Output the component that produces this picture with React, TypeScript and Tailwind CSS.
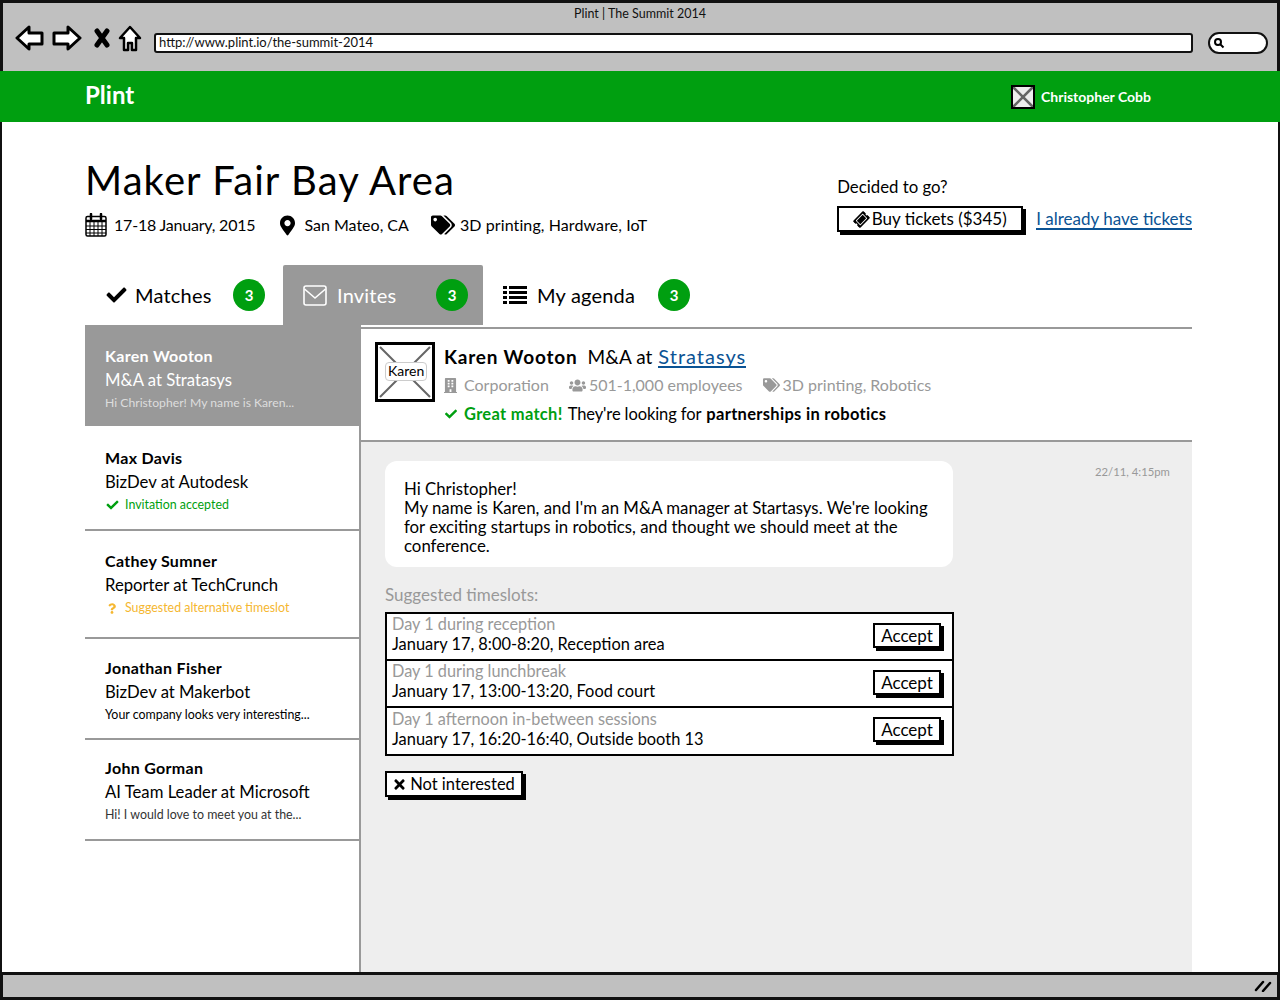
import { FaCheck, FaMapMarkerAlt, FaTags, FaBuilding, FaUsers, FaTicketAlt, FaTimes, FaQuestion } from 'react-icons/fa';

const people = [
  { name: 'Max Davis', role: 'BizDev at Autodesk', note: 'Invitation accepted', tone: 'text-[#009f10]', kind: 'check', box: 'h-[105px] pt-[20px]' },
  { name: 'Cathey Sumner', role: 'Reporter at TechCrunch', note: 'Suggested alternative timeslot', tone: 'text-[#f5b731]', kind: 'question', box: 'h-[108px] pt-[18px]' },
  { name: 'Jonathan Fisher', role: 'BizDev at Makerbot', note: 'Your company looks very interesting...', tone: 'text-black', kind: '', box: 'h-[101px] pt-[17px]' },
  { name: 'John Gorman', role: 'AI Team Leader at Microsoft', note: 'Hi! I would love to meet you at the...', tone: 'text-[#333]', kind: '', box: 'h-[101px] pt-[16px]' },
];

const slots = [
  { title: 'Day 1 during reception', when: 'January 17, 8:00-8:20, Reception area' },
  { title: 'Day 1 during lunchbreak', when: 'January 17, 13:00-13:20, Food court' },
  { title: 'Day 1 afternoon in-between sessions', when: 'January 17, 16:20-16:40, Outside booth 13' },
];

function Badge() {
  return <span className="flex h-[32px] w-[32px] items-center justify-center rounded-full bg-[#009f10] text-[15px] font-bold tracking-normal text-white">3</span>;
}

function CalendarIcon() {
  return (
    <svg width="22" height="24" viewBox="0 0 22 24" fill="none" stroke="#000">
      <rect x="1" y="3.5" width="20" height="19.5" rx="1.5" strokeWidth="1.5" />
      <path d="M1 8h20" strokeWidth="2.5" />
      <path d="M1 13h20M1 16.5h20M1 20h20M5 8v15M9 8v15M13 8v15M17 8v15" strokeWidth="1" />
      <path d="M6 1v5M16 1v5" strokeWidth="2.5" strokeLinecap="round" />
    </svg>
  );
}

function ListIcon() {
  return (
    <svg width="24" height="20" viewBox="0 0 24 20" fill="#000">
      <path d="M0 1h4v3H0zM6 1h18v3H6zM0 6h4v3H0zM6 6h18v3H6zM0 11h4v3H0zM6 11h18v3H6zM0 16h4v3H0zM6 16h18v3H6z" />
    </svg>
  );
}

function EnvelopeIcon() {
  return (
    <svg width="24" height="21" viewBox="0 0 24 21" fill="none" stroke="#fff" strokeWidth="1.6">
      <rect x="1" y="1" width="22" height="19" rx="2" />
      <path d="m1.5 4 10.5 9 10.5-9" />
    </svg>
  );
}

function BrowserBar() {
  return (
    <div className="relative h-[71px] shrink-0 border-x-[3px] border-t-[3px] border-[#111] bg-[#c0c0c0]">
      <div className="pt-[3px] text-center text-[12.5px] leading-[16px] text-[#111]">Plint | The Summit 2014</div>
      <div className="flex items-center pl-[12px]">
        <svg width="30" height="26" viewBox="0 0 30 26" stroke="#000" strokeWidth="3" strokeLinejoin="round">
          <path d="M2 13 14 2v6h13v11H14v5z" fill="#fff" />
        </svg>
        <svg className="ml-[7px]" width="30" height="26" viewBox="0 0 30 26" stroke="#000" strokeWidth="3" strokeLinejoin="round">
          <path d="M28 13 16 2v6H2v11h14v5z" fill="#fff" />
        </svg>
        <svg className="ml-[12px]" width="16" height="20" viewBox="0 0 16 20" stroke="#000" strokeWidth="5" strokeLinecap="round">
          <path d="M3 3l10 14M13 3 3 17" />
        </svg>
        <svg className="ml-[8px]" width="24" height="27" viewBox="0 0 24 27" stroke="#000" strokeWidth="2.5" strokeLinejoin="round">
          <path d="M12 2 2 13h4v12h4v-7h4v7h4V13h4z" fill="#fff" />
        </svg>
        <div className="ml-[12px] mt-[10px] flex h-[20px] w-[1039px] items-center rounded-[3px] border-[2.5px] border-[#111] bg-white pb-[2px] pl-[3px] text-[13px] leading-none text-[#111]">http://www.plint.io/the-summit-2014</div>
        <div className="ml-[15px] mt-[10px] flex h-[22px] w-[60px] items-center rounded-full border-[2.5px] border-[#111] bg-white pl-[3px]">
          <svg width="12" height="12" viewBox="0 0 12 12" fill="none" stroke="#000" strokeWidth="2">
            <circle cx="5" cy="5" r="3" />
            <path d="m7.5 7.5 3 3" />
          </svg>
        </div>
      </div>
    </div>
  );
}

function GreenBar() {
  return (
    <div className="flex h-[51px] shrink-0 items-center justify-between bg-[#009f10] pl-[85px] pr-[129px] text-white">
      <span className="pb-[3px] text-[24px] font-bold leading-none">Plint</span>
      <div className="flex items-center gap-[6px]">
        <svg width="24" height="24" viewBox="0 0 24 24" className="bg-[#eee]">
          <path d="M2 2l20 20M22 2 2 22" stroke="#666" strokeWidth="2.5" />
          <rect x="1" y="1" width="22" height="22" fill="none" stroke="#000" strokeWidth="2" />
        </svg>
        <span className="text-[14px] font-bold">Christopher Cobb</span>
      </div>
    </div>
  );
}

function EventHeader() {
  return (
    <div className="flex justify-between pt-[33px]">
      <div>
        <h1 className="text-[40px] font-normal leading-[50px] tracking-[1.1px] text-black">Maker Fair Bay Area</h1>
        <div className="mt-[8px] flex items-center text-[16px] leading-[24px] text-black">
          <CalendarIcon />
          <span className="ml-[7px] tracking-[-.2px]">17-18 January, 2015</span>
          <FaMapMarkerAlt className="ml-[25px] h-[21px] w-[15px]" />
          <span className="ml-[9px]">San Mateo, CA</span>
          <FaTags className="ml-[22px] h-[22px] w-[24px]" />
          <span className="ml-[5px] tracking-[.1px]">3D printing, Hardware, IoT</span>
        </div>
      </div>
      <div className="pt-[20px]">
        <div className="text-[16.8px] leading-[24px]">Decided to go?</div>
        <div className="mt-[7px] flex items-center">
          <button className="flex h-[26px] w-[186px] items-center justify-center gap-[3px] border-2 border-black bg-white text-[17px] shadow-[3px_3px_0_#000]">
            <FaTicketAlt className="h-[15px] w-[15px] -rotate-45" /> Buy tickets ($345)
          </button>
          <a className="ml-[13px] border-b-2 border-[#0b5394] text-[17px] leading-[19px] text-[#0b5394]">I already have tickets</a>
        </div>
      </div>
    </div>
  );
}

function Tabs() {
  return (
    <div className="mt-[28px] flex h-[60px] items-stretch text-[20px] tracking-[.2px]">
      <div className="flex w-[198px] items-center pl-[21px]">
        <FaCheck className="h-[20px] w-[21px]" />
        <span className="ml-[8px] w-[98px]">Matches</span>
        <Badge />
      </div>
      <div className="flex w-[200px] items-center rounded-t-[2px] bg-[#999] pl-[20px] text-white">
        <EnvelopeIcon />
        <span className="ml-[10px] w-[99px]">Invites</span>
        <Badge />
      </div>
      <div className="flex items-center pl-[20px]">
        <ListIcon />
        <span className="ml-[10px] w-[121px]">My agenda</span>
        <Badge />
      </div>
    </div>
  );
}

function Sidebar() {
  return (
    <aside className="flex w-[276px] shrink-0 flex-col border-r-2 border-[#999]">
      <div className="h-[101px] bg-[#999] pl-[20px] pt-[19px] text-white">
        <div className="text-[16px] font-bold leading-[24px] tracking-[.3px]">Karen Wooton</div>
        <div className="text-[16.7px] leading-[24px]">M&amp;A at Stratasys</div>
        <div className="text-[12.2px] leading-[22px] text-[#ddd]">Hi Christopher! My name is Karen...</div>
      </div>
      {people.map((p) => (
        <div key={p.name} className={`${p.box} border-b-2 border-[#999] pl-[20px]`}>
          <div className="text-[16px] font-bold leading-[24px] tracking-[.3px] text-black">{p.name}</div>
          <div className="text-[16.7px] leading-[24px] text-black">{p.role}</div>
          <div className={`flex items-center gap-[5px] text-[12.4px] leading-[22px] ${p.tone}`}>
            {p.kind === 'check' && <FaCheck className="h-[12px] w-[15px]" />}
            {p.kind === 'question' && <FaQuestion className="ml-[3px] mr-[4px] h-[11px] w-[8px]" />}
            {p.note}
          </div>
        </div>
      ))}
    </aside>
  );
}

function MatchHeader() {
  return (
    <div className="flex h-[113px] shrink-0 border-b-2 border-[#999] bg-white pl-[14px] pt-[13px]">
      <div className="relative mt-[0px] h-[60px] w-[60px] shrink-0 border-[3px] border-black">
        <svg viewBox="0 0 54 54" className="h-full w-full">
          <path d="M2 2l50 50M52 2 2 52" stroke="#666" strokeWidth="2" />
        </svg>
        <span className="absolute left-[7px] top-[17px] h-[19px] rounded-[4px] border border-[#ccc] bg-white px-[2px] text-[14px] leading-[16px] text-black">Karen</span>
      </div>
      <div className="ml-[9px]">
        <div className="flex items-baseline leading-[30px] text-black">
          <span className="text-[19px] font-bold tracking-[.8px]">Karen Wooton</span>
          <span className="ml-[10px] text-[19px]">M&amp;A at</span>
          <a className="ml-[6px] border-b-2 border-[#0b5394] text-[20px] leading-[20px] tracking-[1px] text-[#0b5394]">Stratasys</a>
        </div>
        <div className="-mt-[1px] flex items-center text-[16px] leading-[28px] text-[#999]">
          <FaBuilding className="h-[15px] w-[13px]" />
          <span className="ml-[7px]">Corporation</span>
          <FaUsers className="ml-[20px] h-[15px] w-[17px]" />
          <span className="ml-[3px]">501-1,000 employees</span>
          <FaTags className="ml-[20px] h-[14px] w-[17px]" />
          <span className="ml-[3px]">3D printing, Robotics</span>
        </div>
        <div className="flex items-center text-[16.5px] leading-[30px] text-black">
          <FaCheck className="h-[12px] w-[14px] text-[#009f10]" />
          <span className="ml-[6px] font-bold tracking-[.3px] text-[#009f10]">Great match!</span>
          <span className="ml-[5px] tracking-[-.1px]">They're looking for</span>
          <span className="ml-[5px] font-bold tracking-[.3px]">partnerships in robotics</span>
        </div>
      </div>
    </div>
  );
}

function SlotRow({ title, when }: { title: string; when: string }) {
  return (
    <div className="flex h-[47px] items-center justify-between border-b-2 border-black pl-[5px] pr-[11px] last:h-[46px] last:border-b-0">
      <div className="pb-[5px] leading-[20px]">
        <div className="text-[16.3px] text-[#999]">{title}</div>
        <div className="text-[16.4px] text-black">{when}</div>
      </div>
      <button className="mb-[3px] h-[25px] w-[68px] border-2 border-black bg-white text-[17px] leading-none shadow-[3px_3px_0_#000]">Accept</button>
    </div>
  );
}

function Conversation() {
  return (
    <div className="flex-1 bg-[#eee] pl-[24px] pt-[19px]">
      <div className="flex items-start">
        <div className="h-[106px] w-[568px] rounded-[12px] bg-white pl-[19px] pr-[20px] pt-[18px] text-[16.8px] leading-[19px] text-black">
          Hi Christopher!
          <br />
          My name is Karen, and I'm an M&amp;A manager at Startasys. We're looking for exciting startups in robotics, and thought we should meet at the conference.
        </div>
        <div className="ml-[142px] text-[11.3px] leading-[22px] text-[#999]">22/11, 4:15pm</div>
      </div>
      <div className="mt-[17px] text-[17px] leading-[22px] text-[#999]">Suggested timeslots:</div>
      <div className="mt-[6px] w-[569px] border-2 border-black bg-white">
        {slots.map((s) => (
          <SlotRow key={s.title} title={s.title} when={s.when} />
        ))}
      </div>
      <button className="mt-[15px] flex h-[26px] w-[138px] items-center justify-center gap-[4px] border-2 border-black bg-white text-[16.5px] shadow-[3px_3px_0_#000]">
        <FaTimes className="h-[15px] w-[13px]" /> Not interested
      </button>
    </div>
  );
}

export default function App() {
  return (
    <div className="flex h-[1000px] w-[1280px] flex-col overflow-hidden bg-white [font-family:Lato,'Open_Sans',sans-serif]">
      <BrowserBar />
      <GreenBar />
      <main className="flex min-h-0 flex-1 flex-col border-x-[2px] border-[#111] pl-[83px] pr-[86px]">
        <EventHeader />
        <Tabs />
        <div className="flex min-h-0 flex-1">
          <Sidebar />
          <section className="flex flex-1 flex-col pt-[2px]">
            <div className="h-[2px] shrink-0 bg-[#999]" />
            <MatchHeader />
            <Conversation />
          </section>
        </div>
      </main>
      <div className="flex h-[28px] shrink-0 items-center justify-end border-[3px] border-[#111] bg-[#c0c0c0] pr-[5px]">
        <svg width="18" height="12" viewBox="0 0 18 12" stroke="#000" strokeWidth="2.5" strokeLinecap="round">
          <path d="M2 10 9 2M9 11l7-8" />
        </svg>
      </div>
    </div>
  );
}
